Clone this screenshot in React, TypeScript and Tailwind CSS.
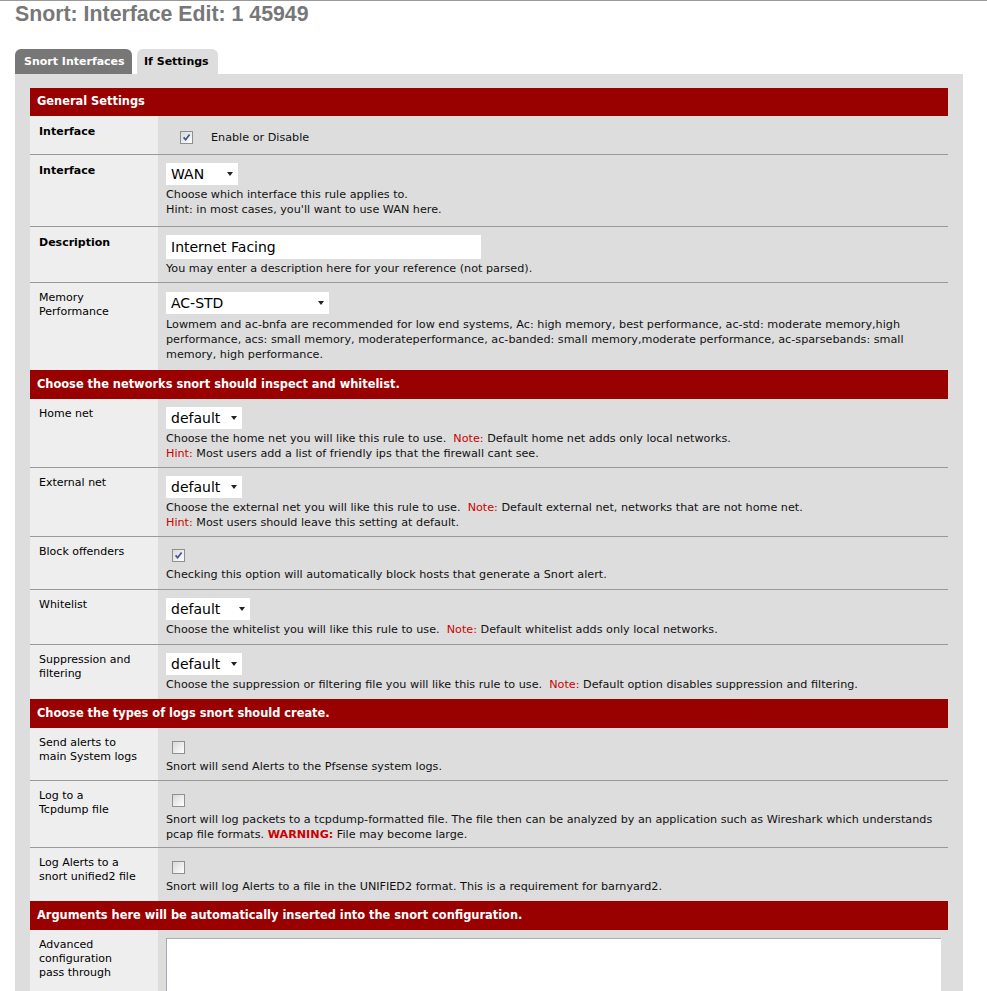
import type { ReactNode } from "react";

// section bar across the settings table
function Header({ title, h }: { title: string; h: string }) {
  return (
    <div className={`flex items-center bg-[#990000] pl-[7px] text-[11.4px] font-bold text-white ${h}`}>
      {title}
    </div>
  );
}

function Row({
  label,
  bold,
  h,
  last,
  children,
}: {
  label: ReactNode;
  bold?: boolean;
  h: string;
  last?: boolean;
  children: ReactNode;
}) {
  return (
    <div className={`flex ${h} ${last ? "" : "border-b border-[#999999]"}`}>
      <div
        className={`w-[128px] shrink-0 bg-[#eeeeee] pl-[9px] text-[11px] leading-[14px] ${
          bold ? "pt-[9px] font-bold" : "pt-[8px]"
        }`}
      >
        {label}
      </div>
      <div className="flex-1 bg-[#dddddd] pl-[8px] text-[11.2px] leading-[15px] text-[#111111]">{children}</div>
    </div>
  );
}

function Select({ value, w }: { value: string; w: string }) {
  return (
    <div className={`mb-[2px] flex h-[22px] items-center justify-between bg-white pl-[5px] pr-[5px] text-[14px] leading-none text-black ${w}`}>
      <span>{value}</span>
      <span className="h-0 w-0 border-x-[3px] border-t-[4px] border-x-transparent border-t-[#222222]" />
    </div>
  );
}

function Check({ checked }: { checked?: boolean }) {
  return (
    <span className="inline-flex h-[13px] w-[13px] shrink-0 items-center justify-center border border-[#8e8f8f] bg-linear-to-br from-[#d8d8d8] to-[#ffffff]">
      {checked && (
        <svg width="9" height="9" viewBox="0 0 9 9">
          <path d="M1.6 4.4 L3.6 6.7 L7.6 1.6" fill="none" stroke="#3f5296" strokeWidth="1.7" />
        </svg>
      )}
    </span>
  );
}

const Red = ({ children }: { children: ReactNode }) => <span className="text-[#cc0000]">{children}</span>;

export default function App() {
  return (
    <div className="min-h-[991px] border-t border-[#999999] bg-white font-['DejaVu_Sans',sans-serif] text-black">
      <h1 className="mt-[1px] ml-[15px] font-['Liberation_Sans',Arial,sans-serif] text-[21.3px] leading-[24px] font-bold text-[#777777]">
        Snort: Interface Edit: 1 45949
      </h1>

      <div className="mt-[23px] ml-[15px] flex h-[25px] gap-[5px] text-[11px] font-bold">
        <div className="flex w-[117px] items-center rounded-t-[6px] bg-[#777777] pt-[1px] pl-[9px] text-white">Snort Interfaces</div>
        <div className="flex w-[81px] items-center rounded-t-[6px] bg-[#dddddd] pt-[1px] pl-[7px] text-black">If Settings</div>
      </div>

      <div className="ml-[15px] w-[948px] bg-[#dddddd] px-[15px] pt-[14px] pb-[20px]">
        <Header title="General Settings" h="h-[28px]" />

        <Row label="Interface" bold h="h-[39px]">
          <div className="flex items-center pt-[14px]">
            <span className="ml-[14px] flex">
              <Check checked />
            </span>
            <span className="ml-[18px]">Enable or Disable</span>
          </div>
        </Row>

        <Row label="Interface" bold h="h-[72px]">
          <div className="pt-[8px]">
            <Select value="WAN" w="w-[72px]" />
            Choose which interface this rule applies to.
            <br />
            Hint: in most cases, you'll want to use WAN here.
          </div>
        </Row>

        <Row label="Description" bold h="h-[56px]">
          <div className="pt-[8px]">
            <input
              readOnly
              value="Internet Facing"
              className="mb-[2px] block h-[24px] w-[315px] bg-white pl-[5px] text-[14px] text-black outline-none"
            />
            You may enter a description here for your reference (not parsed).
          </div>
        </Row>

        <Row
          label={
            <>
              Memory
              <br />
              Performance
            </>
          }
          h="h-[87px]"
          last
        >
          <div className="pt-[9px]">
            <Select value="AC-STD" w="w-[163px]" />
            <div className="pt-[1px]">
              Lowmem and ac-bnfa are recommended for low end systems, Ac: high memory, best performance, ac-std: moderate memory,high
              <br />
              performance, acs: small memory, moderateperformance, ac-banded: small memory,moderate performance, ac-sparsebands: small
              <br />
              memory, high performance.
            </div>
          </div>
        </Row>

        <Header title="Choose the networks snort should inspect and whitelist." h="h-[29px]" />

        <Row label="Home net" h="h-[69px]">
          <div className="pt-[8px]">
            <Select value="default" w="w-[76px]" />
            Choose the home net you will like this rule to use.&nbsp; <Red>Note:</Red> Default home net adds only local networks.
            <br />
            <Red>Hint:</Red> Most users add a list of friendly ips that the firewall cant see.
          </div>
        </Row>

        <Row label="External net" h="h-[69px]">
          <div className="pt-[8px]">
            <Select value="default" w="w-[76px]" />
            Choose the external net you will like this rule to use.&nbsp; <Red>Note:</Red> Default external net, networks that are not home net.
            <br />
            <Red>Hint:</Red> Most users should leave this setting at default.
          </div>
        </Row>

        <Row label="Block offenders" h="h-[53px]">
          <div className="pt-[12px]">
            <span className="ml-[6px] flex">
              <Check checked />
            </span>
            <div className="mt-[5px]">Checking this option will automatically block hosts that generate a Snort alert.</div>
          </div>
        </Row>

        <Row label="Whitelist" h="h-[55px]">
          <div className="pt-[8px]">
            <Select value="default" w="w-[84px]" />
            Choose the whitelist you will like this rule to use.&nbsp; <Red>Note:</Red> Default whitelist adds only local networks.
          </div>
        </Row>

        <Row
          label={
            <>
              Suppression and
              <br />
              filtering
            </>
          }
          h="h-[54px]"
          last
        >
          <div className="pt-[8px]">
            <Select value="default" w="w-[76px]" />
            Choose the suppression or filtering file you will like this rule to use.&nbsp; <Red>Note:</Red> Default option disables suppression and filtering.
          </div>
        </Row>

        <Header title="Choose the types of logs snort should create." h="h-[29px]" />

        <Row
          label={
            <>
              Send alerts to
              <br />
              main System logs
            </>
          }
          h="h-[53px]"
        >
          <div className="pt-[13px]">
            <span className="ml-[6px] flex">
              <Check />
            </span>
            <div className="mt-[5px]">Snort will send Alerts to the Pfsense system logs.</div>
          </div>
        </Row>

        <Row
          label={
            <>
              Log to a
              <br />
              Tcpdump file
            </>
          }
          h="h-[67px]"
        >
          <div className="pt-[13px]">
            <span className="ml-[6px] flex">
              <Check />
            </span>
            <div className="mt-[5px]">
              Snort will log packets to a tcpdump-formatted file. The file then can be analyzed by an application such as Wireshark which understands
              <br />
              pcap file formats. <span className="font-bold text-[#cc0000]">WARNING:</span> File may become large.
            </div>
          </div>
        </Row>

        <Row
          label={
            <>
              Log Alerts to a
              <br />
              snort unified2 file
            </>
          }
          h="h-[53px]"
          last
        >
          <div className="pt-[13px]">
            <span className="ml-[6px] flex">
              <Check />
            </span>
            <div className="mt-[5px]">Snort will log Alerts to a file in the UNIFIED2 format. This is a requirement for barnyard2.</div>
          </div>
        </Row>

        <Header title="Arguments here will be automatically inserted into the snort configuration." h="h-[29px]" />

        <Row
          label={
            <>
              Advanced
              <br />
              configuration
              <br />
              pass through
            </>
          }
          h="h-[90px]"
          last
        >
          <div className="pt-[8px]">
            <textarea
              readOnly
              className="block h-[80px] w-[775px] resize-none border-t border-l border-[#a7a9b3] bg-white outline-none"
            />
          </div>
        </Row>
      </div>
    </div>
  );
}
